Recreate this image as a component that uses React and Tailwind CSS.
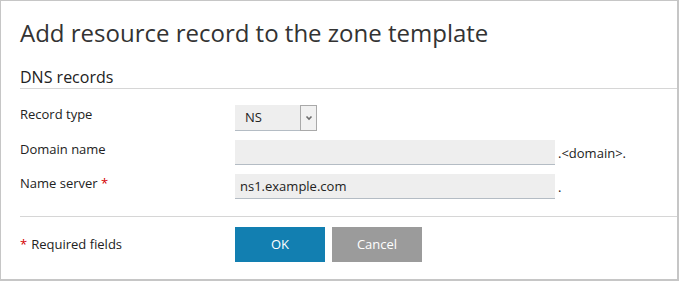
export default function App() {
  return (
    <div className="w-[679px] h-[281px] box-border border-t border-l border-r-2 border-b-2 border-[#c6c6c6] bg-white pl-[19px] font-['Open_Sans',sans-serif] text-[#222]">
      <h1 className="pt-[16px] text-[24px] leading-[32px] text-[#333] font-normal">
        Add resource record to the zone template
      </h1>
      <h2 className="mt-[17px] text-[16px] leading-[22px] font-normal border-b border-[#d6d6d6]">
        DNS records
      </h2>
      <div className="mt-[16px] grid grid-cols-[215px_1fr] gap-y-[9px] text-[13px]">
        <div className="leading-[18px]">Record type</div>
        <div className="flex">
          <div className="flex h-[26px] w-[82px] bg-[#eeeeee] border-b border-[#b4bcc4]">
            <div className="flex-1 pl-[10px] leading-[25px]">NS</div>
            <div className="w-[17px] h-[26px] border border-[#a9a9a9] bg-[#f1f1f1] flex items-center justify-center">
              <svg width="8" height="6" viewBox="0 0 8 6">
                <path d="M1.5 1.5 L4 4 L6.5 1.5" fill="none" stroke="#6d6d6d" strokeWidth="1.6" />
              </svg>
            </div>
          </div>
        </div>
        <div className="leading-[18px]">Domain name</div>
        <div className="flex items-center">
          <div className="h-[25px] w-[320px] bg-[#eeeeee] border-b border-[#b4bcc4]"></div>
          <span className="ml-[3px] leading-[18px]">.&lt;domain&gt;.</span>
        </div>
        <div className="leading-[18px]">
          Name server <span className="text-[#d40000]">*</span>
        </div>
        <div className="flex items-center">
          <div className="h-[25px] w-[320px] bg-[#eeeeee] border-b border-[#b4bcc4] pl-[5px] leading-[24px]">
            ns1.example.com
          </div>
          <span className="ml-[3px] leading-[18px]">.</span>
        </div>
      </div>
      <div className="mt-[17px] border-t border-[#d6d6d6]"></div>
      <div className="mt-[10px] grid grid-cols-[215px_1fr] text-[13px]">
        <div className="flex items-center">
          <span className="text-[#d40000] mr-[4px]">*</span>
          <span>Required fields</span>
        </div>
        <div className="flex gap-[7px]">
          <button className="w-[90px] h-[35px] bg-[#127fb1] text-white">OK</button>
          <button className="w-[90px] h-[35px] bg-[#9b9b9b] text-white">Cancel</button>
        </div>
      </div>
    </div>
  );
}
